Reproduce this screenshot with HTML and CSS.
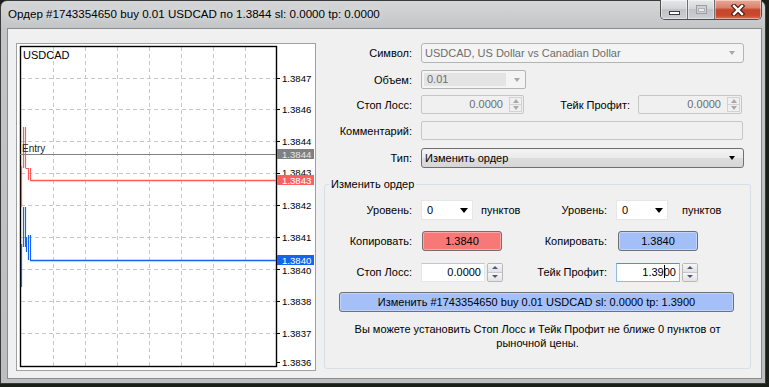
FILE: index.html
```html
<!DOCTYPE html>
<html lang="ru">
<head>
<meta charset="utf-8">
<title>Ордер</title>
<link rel="stylesheet" href="styles.css">
</head>
<body>
<div class="window">
  <div class="titlebar">
    <span class="title">Ордер #1743354650 buy 0.01 USDCAD по 1.3844 sl: 0.0000 tp: 0.0000</span>
    <div class="ctrls">
      <div class="cbtn min"><svg width="13" height="6" viewBox="0 0 13 6"><rect x="1.5" y="1.5" width="10" height="3" fill="#fff" stroke="#3b3b3b"/></svg></div>
      <div class="cbtn max"><svg width="13" height="10" viewBox="0 0 13 10"><rect x="1.5" y="0.5" width="10" height="8" fill="#cfd2d5" stroke="#9a9ea3"/><rect x="3.5" y="3.5" width="6" height="3" fill="#e8eaec" stroke="#aeb2b6"/></svg></div>
      <div class="cbtn close"><svg width="16" height="12" viewBox="0 0 16 12"><path d="M4 2 L12 10 M12 2 L4 10" stroke="#4a1f14" stroke-width="4.6" stroke-linecap="square"/><path d="M4 2 L12 10 M12 2 L4 10" stroke="#fff" stroke-width="2.4" stroke-linecap="square"/></svg></div>
    </div>
  </div>
  <div class="client">
    <div class="chart">
      <svg width="298" height="326" viewBox="0 0 298 326">
        <g stroke="#c8c8c8" stroke-width="1" stroke-dasharray="4 3" fill="none">
          <path d="M4 34.5 H259 M4 65.5 H259 M4 97.5 H259 M4 129.5 H259 M4 161.5 H259 M4 193.5 H259 M4 225.5 H259 M4 257.5 H259 M4 289.5 H259"/>
          <path d="M36.5 3 V322 M68.5 3 V322 M100.5 3 V322 M132.5 3 V322 M164.5 3 V322 M196.5 3 V322 M228.5 3 V322"/>
        </g>
        <rect x="3.5" y="2.5" width="256" height="320" fill="none" stroke="#000" stroke-width="1.4"/>
        <path d="M259 34.5 H263 M259 65.5 H263 M259 97.5 H263 M259 129.5 H263 M259 161.5 H263 M259 193.5 H263 M259 225.5 H263 M259 257.5 H263 M259 289.5 H263 M259 318.5 H263" stroke="#000" stroke-width="1"/>
        <g class="axis">
          <text x="265" y="37.5">1.3847</text>
          <text x="265" y="68.5">1.3846</text>
          <text x="265" y="100.5">1.3844</text>
          <text x="265" y="131.5">1.3843</text>
          <text x="265" y="164.5">1.3842</text>
          <text x="265" y="196.5">1.3841</text>
          <text x="265" y="229.5">1.3840</text>
          <text x="265" y="260.5">1.3838</text>
          <text x="265" y="292.5">1.3837</text>
          <text x="265" y="321.5">1.3836</text>
        </g>
        <text class="sym" x="6" y="15">USDCAD</text>
        <g stroke="#ff5a5a" stroke-width="1.2" fill="none">
          <path d="M6.5 83 V124 M8.5 83 V124 M8.5 124.5 H11.5 M11.5 124 V136 M13.5 124 V136 M4.5 122 V163"/>
          <path d="M13 136.5 H259" stroke-width="1.4"/>
        </g>
        <g stroke="#1464f0" stroke-width="1.2" fill="none">
          <path d="M6.5 163 V203 M8.5 163 V203 M4.5 200 V243 M11.5 191 V216 M13.5 191 V216 M9.5 193 V208"/>
          <path d="M13 216.5 H259" stroke-width="1.4"/>
        </g>
        <path d="M3 110.5 H259" stroke="#808080" stroke-width="1"/>
        <text class="entry" x="5" y="108">Entry</text>
        <rect x="260" y="105" width="37" height="10" fill="#808080"/>
        <text class="boxt grey" x="265" y="113.5">1.3844</text>
        <rect x="260" y="131" width="37" height="10" fill="#ff5f5f"/>
        <text class="boxt" x="265" y="139.5">1.3843</text>
        <rect x="260" y="211" width="37" height="10" fill="#1464f0"/>
        <text class="boxt" x="265" y="219.5">1.3840</text>
      </svg>
    </div>
    <div class="form">
      <div class="row r1">
        <span class="lbl">Символ:</span>
        <div class="combo dis wide"><span class="cv">USDCAD, US Dollar vs Canadian Dollar</span><i class="tri dn grey"></i></div>
      </div>
      <div class="row r2">
        <span class="lbl">Объем:</span>
        <div class="combo dis vol"><span class="cv inner">0.01</span><i class="tri dn grey"></i></div>
      </div>
      <div class="row r3">
        <span class="lbl">Стоп Лосс:</span>
        <div class="spin dis sp1">
          <span class="sv">0.0000</span>
          <span class="sbtns"><span class="sb"><i class="tri up grey"></i></span><span class="sb"><i class="tri dn grey"></i></span></span>
        </div>
        <span class="lbl lbl2">Тейк Профит:</span>
        <div class="spin dis sp2">
          <span class="sv">0.0000</span>
          <span class="sbtns"><span class="sb"><i class="tri up grey"></i></span><span class="sb"><i class="tri dn grey"></i></span></span>
        </div>
      </div>
      <div class="row r4">
        <span class="lbl">Комментарий:</span>
        <div class="edit dis wide2"></div>
      </div>
      <div class="row r5">
        <span class="lbl">Тип:</span>
        <div class="combo btnlike wide"><span class="cv">Изменить ордер</span><i class="tri dn"></i></div>
      </div>
      <fieldset class="group">
        <legend>Изменить ордер</legend>
        <div class="grow">
          <div class="half">
            <span class="glbl">Уровень:</span>
            <div class="combo white lvl"><span class="cv">0</span><i class="tri dn big"></i></div>
            <span class="unit">пунктов</span>
          </div>
          <div class="half right">
            <span class="glbl r">Уровень:</span>
            <div class="combo white lvl"><span class="cv">0</span><i class="tri dn big"></i></div>
            <span class="unit u2">пунктов</span>
          </div>
        </div>
        <div class="grow">
          <div class="half">
            <span class="glbl">Копировать:</span>
            <div class="pbtn red">1.3840</div>
          </div>
          <div class="half right">
            <span class="glbl r">Копировать:</span>
            <div class="pbtn blue b2">1.3840</div>
          </div>
        </div>
        <div class="grow g3">
          <div class="half">
            <span class="glbl">Стоп Лосс:</span>
            <div class="spin en">
              <span class="sv">0.0000</span>
              <span class="sbtns"><span class="sb"><i class="tri up navy"></i></span><span class="sb"><i class="tri dn navy"></i></span></span>
            </div>
          </div>
          <div class="half right">
            <span class="glbl r">Тейк Профит:</span>
            <div class="spin en focus">
              <span class="sv">1.39<span class="caret"></span>00</span>
              <span class="sbtns"><span class="sb"><i class="tri up navy"></i></span><span class="sb"><i class="tri dn navy"></i></span></span>
            </div>
          </div>
        </div>
        <div class="bigbtn">Изменить #1743354650 buy 0.01 USDCAD sl: 0.0000 tp: 1.3900</div>
        <p class="note">Вы можете установить Стоп Лосс и Тейк Профит не ближе 0 пунктов от<br>рыночной цены.</p>
      </fieldset>
    </div>
  </div>
</div>
</body>
</html>
```

FILE: styles.css
```css
html, body {
  margin: 0;
  padding: 0;
}
body {
  width: 769px;
  height: 387px;
  overflow: hidden;
  background: #1a1f18;
  font-family: "Liberation Sans", Arial, sans-serif;
  font-size: 11px;
  color: #000;
}
.window {
  width: 766px;
  height: 384px;
  box-sizing: border-box;
  border: 1px solid #3a3a3a;
  border-radius: 7px 7px 0 0;
  background: linear-gradient(to bottom, #d4d6d8 0px, #c3c5c7 27px, #bcbec0 100%);
  display: flex;
  flex-direction: column;
}
.titlebar {
  height: 27px;
  display: flex;
  align-items: flex-start;
  flex: none;
}
.title {
  font-size: 11.6px;
  line-height: 14px;
  margin: 6px 0 0 7px;
  color: #000;
  text-shadow: 0 0 6px rgba(255, 255, 255, 0.7);
  white-space: nowrap;
}
.ctrls {
  margin-left: auto;
  margin-right: 3px;
  margin-top: -1px;
  display: flex;
  height: 19px;
  border: 1px solid #4e4e4e;
  border-top: none;
  border-radius: 0 0 5px 5px;
  overflow: hidden;
}
.cbtn {
  display: flex;
  align-items: center;
  justify-content: center;
  box-shadow: inset 0 0 0 1px rgba(255, 255, 255, 0.45);
}
.cbtn.min {
  width: 27px;
  border-right: 1px solid #6e6e6e;
  background: linear-gradient(to bottom, #e6e8ea 0%, #d3d6d9 45%, #c0c4c8 50%, #cbced2 100%);
  align-items: flex-end;
  padding-bottom: 3px;
  box-sizing: border-box;
}
.cbtn.max {
  width: 26px;
  border-right: 1px solid #6e6e6e;
  background: linear-gradient(to bottom, #e6e8ea 0%, #d3d6d9 45%, #c0c4c8 50%, #cbced2 100%);
}
.cbtn.close {
  width: 46px;
  background: linear-gradient(to bottom, #e8a996 0%, #d9826c 40%, #c4452a 52%, #c9492d 80%, #d86e55 100%);
}
.client {
  height: 351px;
  box-sizing: border-box;
  margin: 0 3px 0 6px;
  border: 1px solid #8c8c8c;
  background: #f0f0f0;
  display: flex;
  align-items: flex-start;
  padding: 14px 0 0 8px;
}
.chart {
  width: 300px;
  height: 328px;
  box-sizing: border-box;
  border: 1px solid #a0a0a0;
  background: #fff;
  flex: none;
}
.chart svg {
  display: block;
}
.axis text {
  font-family: "Liberation Sans", Arial, sans-serif;
  font-size: 9.6px;
  fill: #000;
}
.sym {
  font-family: "Liberation Sans", Arial, sans-serif;
  font-size: 11px;
  fill: #000;
}
.entry {
  font-family: "Liberation Sans", Arial, sans-serif;
  font-size: 10px;
  fill: #222;
}
.boxt {
  font-family: "Liberation Sans", Arial, sans-serif;
  font-size: 9.6px;
  fill: #fff;
}
.boxt.grey {
  fill: #e6e6e6;
}
.form {
  margin-left: 8px;
  width: 427px;
  display: flex;
  flex-direction: column;
}
.row {
  display: flex;
  align-items: center;
  height: 20px;
}
.r1 { margin-bottom: 7px; }
.r2 { height: 19px; margin-bottom: 6px; }
.r3 { height: 19px; margin-bottom: 7px; }
.r4 { height: 19px; margin-bottom: 8px; }
.lbl {
  width: 88px;
  margin-right: 9px;
  text-align: right;
  white-space: nowrap;
  flex: none;
}
.lbl2 {
  width: 98px;
  margin-left: 8px;
  margin-right: 8px;
}
.tri {
  display: block;
  width: 0;
  height: 0;
  border-left: 3.5px solid transparent;
  border-right: 3.5px solid transparent;
  flex: none;
}
.tri.dn { border-top: 4px solid #000; }
.tri.up { border-bottom: 4px solid #000; }
.tri.dn.grey { border-top-color: #a8a8a8; }
.tri.up.grey { border-bottom-color: #a8a8a8; }
.tri.dn.navy { border-top-color: #4a5a7c; border-left-width: 3px; border-right-width: 3px; border-top-width: 3px; }
.tri.up.navy { border-bottom-color: #4a5a7c; border-left-width: 3px; border-right-width: 3px; border-bottom-width: 3px; }
.tri.big { border-left-width: 4.5px; border-right-width: 4.5px; border-top-width: 5px; }
.combo {
  box-sizing: border-box;
  height: 20px;
  display: flex;
  align-items: center;
  border: 1px solid #b4b4b4;
  border-radius: 3px;
  padding: 0 8px 0 3px;
}
.combo .cv {
  flex: 1;
  white-space: nowrap;
}
.combo.dis {
  background: #f4f4f4;
  color: #6d6d6d;
}
.combo.wide {
  width: 323px;
}
.combo.vol {
  width: 105px;
  height: 19px;
  padding: 2px 6px 2px 2px;
  border-radius: 2px;
}
.combo.vol .cv.inner {
  flex: none;
  width: 79px;
  height: 13px;
  line-height: 13px;
  padding-left: 3px;
  background: #e4e4e4;
  margin-right: 8px;
}
.combo.btnlike {
  background: linear-gradient(to bottom, #f3f3f3 0%, #ebebeb 48%, #dddddd 52%, #d6d6d6 100%);
  border-color: #707070;
}
.edit.dis {
  box-sizing: border-box;
  height: 19px;
  border: 1px solid #c6c6c6;
  border-radius: 2px;
  background: #f0f0f0;
}
.edit.wide2 {
  width: 322px;
}
.spin {
  box-sizing: border-box;
  display: flex;
  height: 19px;
  flex: none;
}
.spin.dis {
  border: 1px solid #c6c6c6;
  border-radius: 2px;
  background: #f0f0f0;
  color: #6d6d6d;
}
.spin.sp1 { width: 103px; }
.spin.sp2 { width: 104px; }
.spin .sv {
  flex: 1;
  text-align: right;
  line-height: 17px;
  padding-right: 6px;
}
.spin .sbtns {
  width: 14px;
  display: flex;
  flex-direction: column;
  padding: 1px 1px 1px 0;
  box-sizing: border-box;
}
.spin .sb {
  flex: 1;
  display: flex;
  align-items: center;
  justify-content: center;
  border: 1px solid #d2d2d2;
}
.spin .sb + .sb {
  border-top: none;
}
.group {
  margin: 9px 0 0 0;
  width: 427px;
  box-sizing: border-box;
  border: 1px solid #d5dfe5;
  border-radius: 3px;
  padding: 9px 0 18px 0;
  min-inline-size: 0;
}
.group legend {
  padding: 0 2px;
  margin-left: 4px;
  line-height: 14px;
}
.grow {
  display: flex;
  align-items: center;
  height: 20px;
  margin-bottom: 11px;
}
.grow.g3 {
  margin-bottom: 10px;
}
.half {
  width: 205px;
  display: flex;
  align-items: center;
  flex: none;
}
.half.right {
  width: auto;
  flex: 1;
}
.glbl {
  width: 87px;
  margin-right: 9px;
  text-align: right;
  white-space: nowrap;
  flex: none;
}
.glbl.r {
  width: 77px;
}
.combo.white {
  background: #fff;
  border: 1px solid #e6e6e6;
  border-radius: 0;
  padding: 0 4px 0 5px;
}
.combo.lvl {
  width: 52px;
}
.unit {
  margin-left: 8px;
}
.unit.u2 {
  margin-left: 14px;
}
.pbtn {
  box-sizing: border-box;
  width: 80px;
  height: 20px;
  margin-left: 1px;
  border: 1px solid #707070;
  border-radius: 3px;
  text-align: center;
  line-height: 18px;
  box-shadow: inset 0 0 0 1px rgba(255, 255, 255, 0.35);
}
.pbtn.red {
  background: #f87878;
}
.pbtn.blue {
  background: #a3bff7;
}
.pbtn.b2 {
  margin-left: 2px;
}
.spin.en {
  width: 82px;
}
.spin.en .sv {
  background: #fff;
  border: 1px solid #e2e6ea;
  border-top-color: #c4c8cc;
  padding-right: 3px;
  margin-right: 2px;
}
.spin.en.focus .sv {
  border-color: #8fbbe4;
  border-top-color: #5a8fc4;
}
.spin.en .sbtns {
  width: 16px;
  padding: 0;
  border: 1px solid #b8b8b8;
  border-radius: 2px;
}
.spin.en .sb {
  border: none;
  background: linear-gradient(to bottom, #f6f6f6, #e2e2e2);
}
.spin.en .sb + .sb {
  border-top: 1px solid #c8c8c8;
}
.caret {
  display: inline-block;
  width: 1px;
  height: 13px;
  background: #000;
  vertical-align: -2px;
  margin: 0 -1px 0 0;
}
.bigbtn {
  box-sizing: border-box;
  width: 395px;
  height: 20px;
  margin-left: 14px;
  border: 1px solid #707070;
  border-radius: 3px;
  background: #a5c0f8;
  text-align: center;
  line-height: 18px;
  white-space: nowrap;
  box-shadow: inset 0 0 0 1px rgba(255, 255, 255, 0.3);
}
.note {
  margin: 10px 0 0 0;
  text-align: center;
  line-height: 14px;
}
```
